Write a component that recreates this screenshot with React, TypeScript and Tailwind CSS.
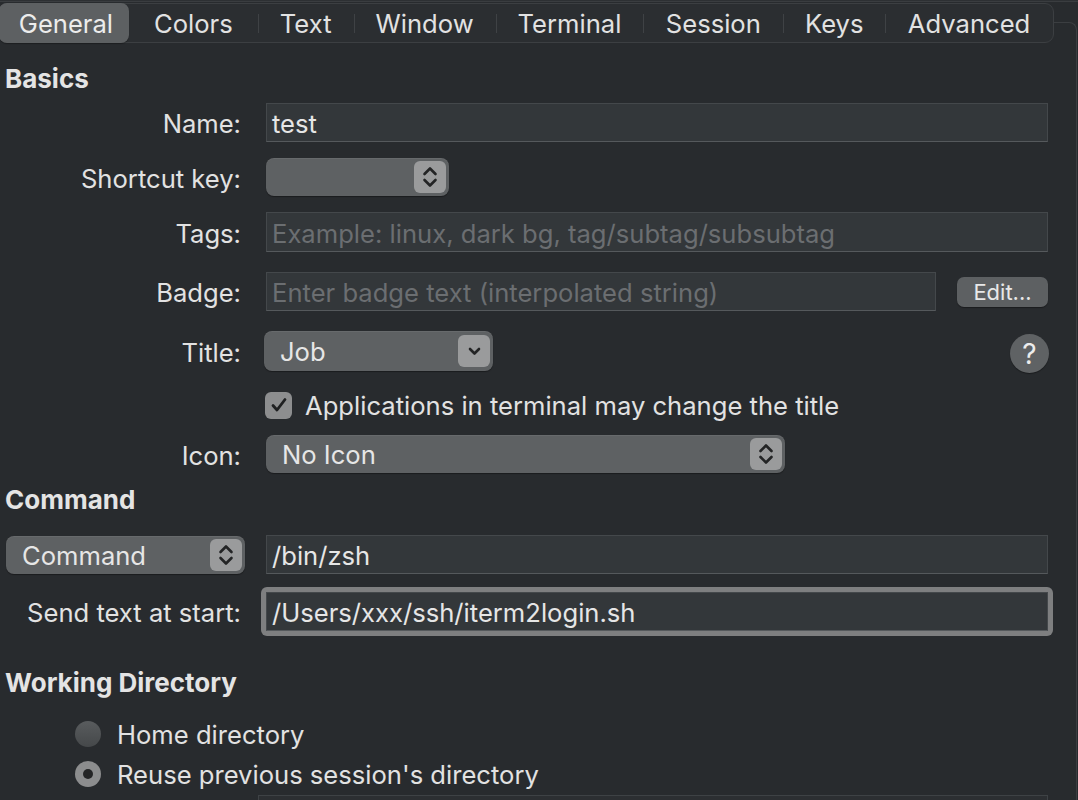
import React from "react";

const FONT = { fontFamily: 'Inter, "Liberation Sans", sans-serif' };

function UpDown() {
  return (
    <svg width="32" height="32" viewBox="0 0 32 32" className="block">
      <path d="M10.5 13 L16 7.5 L21.5 13" fill="none" stroke="#232425" strokeWidth="2.6" strokeLinecap="round" strokeLinejoin="round" />
      <path d="M10.5 19 L16 24.5 L21.5 19" fill="none" stroke="#232425" strokeWidth="2.6" strokeLinecap="round" strokeLinejoin="round" />
    </svg>
  );
}

function Down() {
  return (
    <svg width="31" height="33" viewBox="0 0 31 33" className="block">
      <path d="M11 14 L15.5 18.5 L20 14" fill="none" stroke="#232425" strokeWidth="2.6" strokeLinecap="round" strokeLinejoin="round" />
    </svg>
  );
}

function Popup({ text, w, chip = "updown", h = 38 }: { text?: string; w: number; chip?: "updown" | "down"; h?: number }) {
  return (
    <div
      className="flex items-center rounded-[8px] bg-[#5e6163] shadow-[0_1px_1px_rgba(0,0,0,0.35),inset_0_1px_0_rgba(255,255,255,0.06)] pl-[16px] pr-[3px]"
      style={{ width: w, height: h }}
    >
      <span className="flex-1 pt-[2px] text-[25.6px] leading-none text-[#e6e6e6]">{text}</span>
      <div className="flex items-center justify-center rounded-[6px] bg-[#9a9b9c] w-[32px] h-[32px]">
        {chip === "updown" ? <UpDown /> : <Down />}
      </div>
    </div>
  );
}

function TextField({ value, placeholder, w, h = 39 }: { value?: string; placeholder?: string; w?: number; h?: number }) {
  return (
    <div
      className="flex items-center border border-[#44484b] border-b-[#55595c] bg-[#33373a] px-[5px]"
      style={{ width: w, height: h }}
    >
      {value ? (
        <span className="pt-[3px] text-[25.6px] leading-none text-[#e6e6e6]">{value}</span>
      ) : (
        <span className="pt-[3px] text-[25.6px] leading-none text-[#6b6e71]">{placeholder}</span>
      )}
    </div>
  );
}

function Label({ children, mr = 25 }: { children: React.ReactNode; mr?: number }) {
  return (
    <div className="w-[241px] shrink-0 pt-[3px] text-right text-[25.6px] leading-none text-[#e2e2e2]" style={{ marginRight: mr }}>
      {children}
    </div>
  );
}

const tabs = [
  { t: "General", w: 130 },
  { t: "Colors", w: 129 },
  { t: "Text", w: 96 },
  { t: "Window", w: 142 },
  { t: "Terminal", w: 148 },
  { t: "Session", w: 140 },
  { t: "Keys", w: 102 },
  { t: "Advanced", w: 168 },
];

export default function App() {
  return (
    <div className="w-[1078px] h-[800px] overflow-hidden bg-[#282b2e]" style={FONT}>
      <div className="h-[2px] bg-[#2d3033] border-b border-[#3a3d40]" />
      <div className="mt-[20px] w-[1077px] h-[800px] border-t border-r border-[#3b3e41] rounded-tr-[8px]">
        {/* Tab bar */}
        <div className="-mt-[20px] -ml-[2px] flex h-[40px] w-[1056px] items-stretch rounded-[9px] border border-[#3c3f42] bg-[#2b2e31]">
          {tabs.map((tab, i) => {
            const selected = i === 0;
            const showDivider = i > 1;
            return (
              <div key={tab.t} className="relative flex items-center justify-center" style={{ width: tab.w }}>
                {showDivider && <div className="absolute left-0 top-[10px] h-[19px] w-px bg-[#3f4245]" />}
                {selected ? (
                  <div className="absolute inset-0 -my-px rounded-[8px] bg-[#5d6062] shadow-[0_1px_1px_rgba(0,0,0,0.3)]" />
                ) : null}
                <span className={"relative pt-[2px] text-[25.6px] leading-none " + (selected ? "text-[#ececec] pl-[4px]" : "text-[#e2e2e2]")}>{tab.t}</span>
              </div>
            );
          })}
        </div>

        <div className="flex flex-col">
          {/* Basics */}
          <div className="mt-[22px] h-[26px] flex items-center pl-[5px] pt-[2px] text-[26px] font-bold leading-none text-[#e4e4e4]">Basics</div>

          <div className="mt-[12px] flex h-[39px] items-center">
            <Label>Name:</Label>
            <TextField value="test" w={782} />
          </div>

          <div className="mt-[16px] flex h-[38px] items-center">
            <Label>Shortcut key:</Label>
            <Popup w={183} />
          </div>

          <div className="mt-[16px] flex h-[40px] items-center">
            <Label>Tags:</Label>
            <TextField placeholder="Example: linux, dark bg, tag/subtag/subsubtag" w={782} h={40} />
          </div>

          <div className="mt-[20px] flex h-[39px] items-center">
            <Label>Badge:</Label>
            <TextField placeholder="Enter badge text (interpolated string)" w={670} />
            <div className="ml-[21px] flex h-[30px] w-[91px] items-center justify-center rounded-[7px] bg-[#5d6062] shadow-[0_1px_1px_rgba(0,0,0,0.35)] pt-[1px] text-[22px] leading-none text-[#e8e8e8]">
              Edit...
            </div>
          </div>

          <div className="mt-[20px] flex h-[40px] items-center">
            <Label mr={23}>Title:</Label>
            <Popup text="Job" w={229} h={40} chip="down" />
            <div className="ml-auto mr-[27px] mt-[4px] flex h-[39px] w-[39px] items-center justify-center rounded-full bg-[#5f6264] shadow-[0_1px_1px_rgba(0,0,0,0.35)] pt-[2px] text-[28px] leading-none text-[#ececec]">
              ?
            </div>
          </div>

          <div className="mt-[20px] flex h-[28px] items-center pl-[265px]">
            <div className="flex h-[27px] w-[27px] items-center justify-center rounded-[6px] bg-[#8d8e8f]">
              <svg width="20" height="20" viewBox="0 0 20 20">
                <path d="M4 10.5 L8 15 L16 4.5" fill="none" stroke="#1f2021" strokeWidth="2.8" strokeLinecap="round" strokeLinejoin="round" />
              </svg>
            </div>
            <span className="ml-[13px] pt-[2px] text-[25.6px] leading-none text-[#e2e2e2]">Applications in terminal may change the title</span>
          </div>

          <div className="mt-[16px] flex h-[38px] items-center">
            <Label>Icon:</Label>
            <Popup text="No Icon" w={519} />
          </div>

          {/* Command */}
          <div className="mt-[13px] h-[26px] flex items-center pl-[5px] pt-[2px] text-[26px] font-bold leading-none text-[#e4e4e4]">Command</div>

          <div className="mt-[23px] flex h-[39px] items-center">
            <div className="ml-[6px] mr-[21px]">
              <Popup text="Command" w={239} />
            </div>
            <TextField value="/bin/zsh" w={782} />
          </div>

          <div className="mt-[13px] flex h-[49px] items-center">
            <Label>Send text at start:</Label>
            <div className="shadow-[0_0_0_5px_#7e7f80] rounded-[2px]">
              <TextField value="/Users/xxx/ssh/iterm2login.sh" w={782} />
            </div>
          </div>

          {/* Working Directory */}
          <div className="mt-[33px] h-[26px] flex items-center pl-[5px] pt-[2px] text-[26px] font-bold leading-none text-[#e4e4e4]">Working Directory</div>

          <div className="mt-[25px] flex h-[28px] items-center pl-[75px]">
            <div className="h-[26px] w-[26px] rounded-full bg-gradient-to-b from-[#595c5e] to-[#45484a]" />
            <span className="ml-[16px] pt-[2px] text-[25.6px] leading-none text-[#e2e2e2]">Home directory</span>
          </div>

          <div className="mt-[12px] flex h-[28px] items-center pl-[75px]">
            <div className="flex h-[26px] w-[26px] items-center justify-center rounded-full bg-[#8c8d8e]">
              <div className="h-[10px] w-[10px] rounded-full bg-[#242526]" />
            </div>
            <span className="ml-[16px] pt-[2px] text-[25.6px] leading-none text-[#e2e2e2]">Reuse previous session's directory</span>
          </div>

          <div className="mt-[7px] ml-[258px] h-[40px] w-[790px] border border-[#3e4245] bg-[#2c2f32]" />
        </div>
      </div>
    </div>
  );
}
